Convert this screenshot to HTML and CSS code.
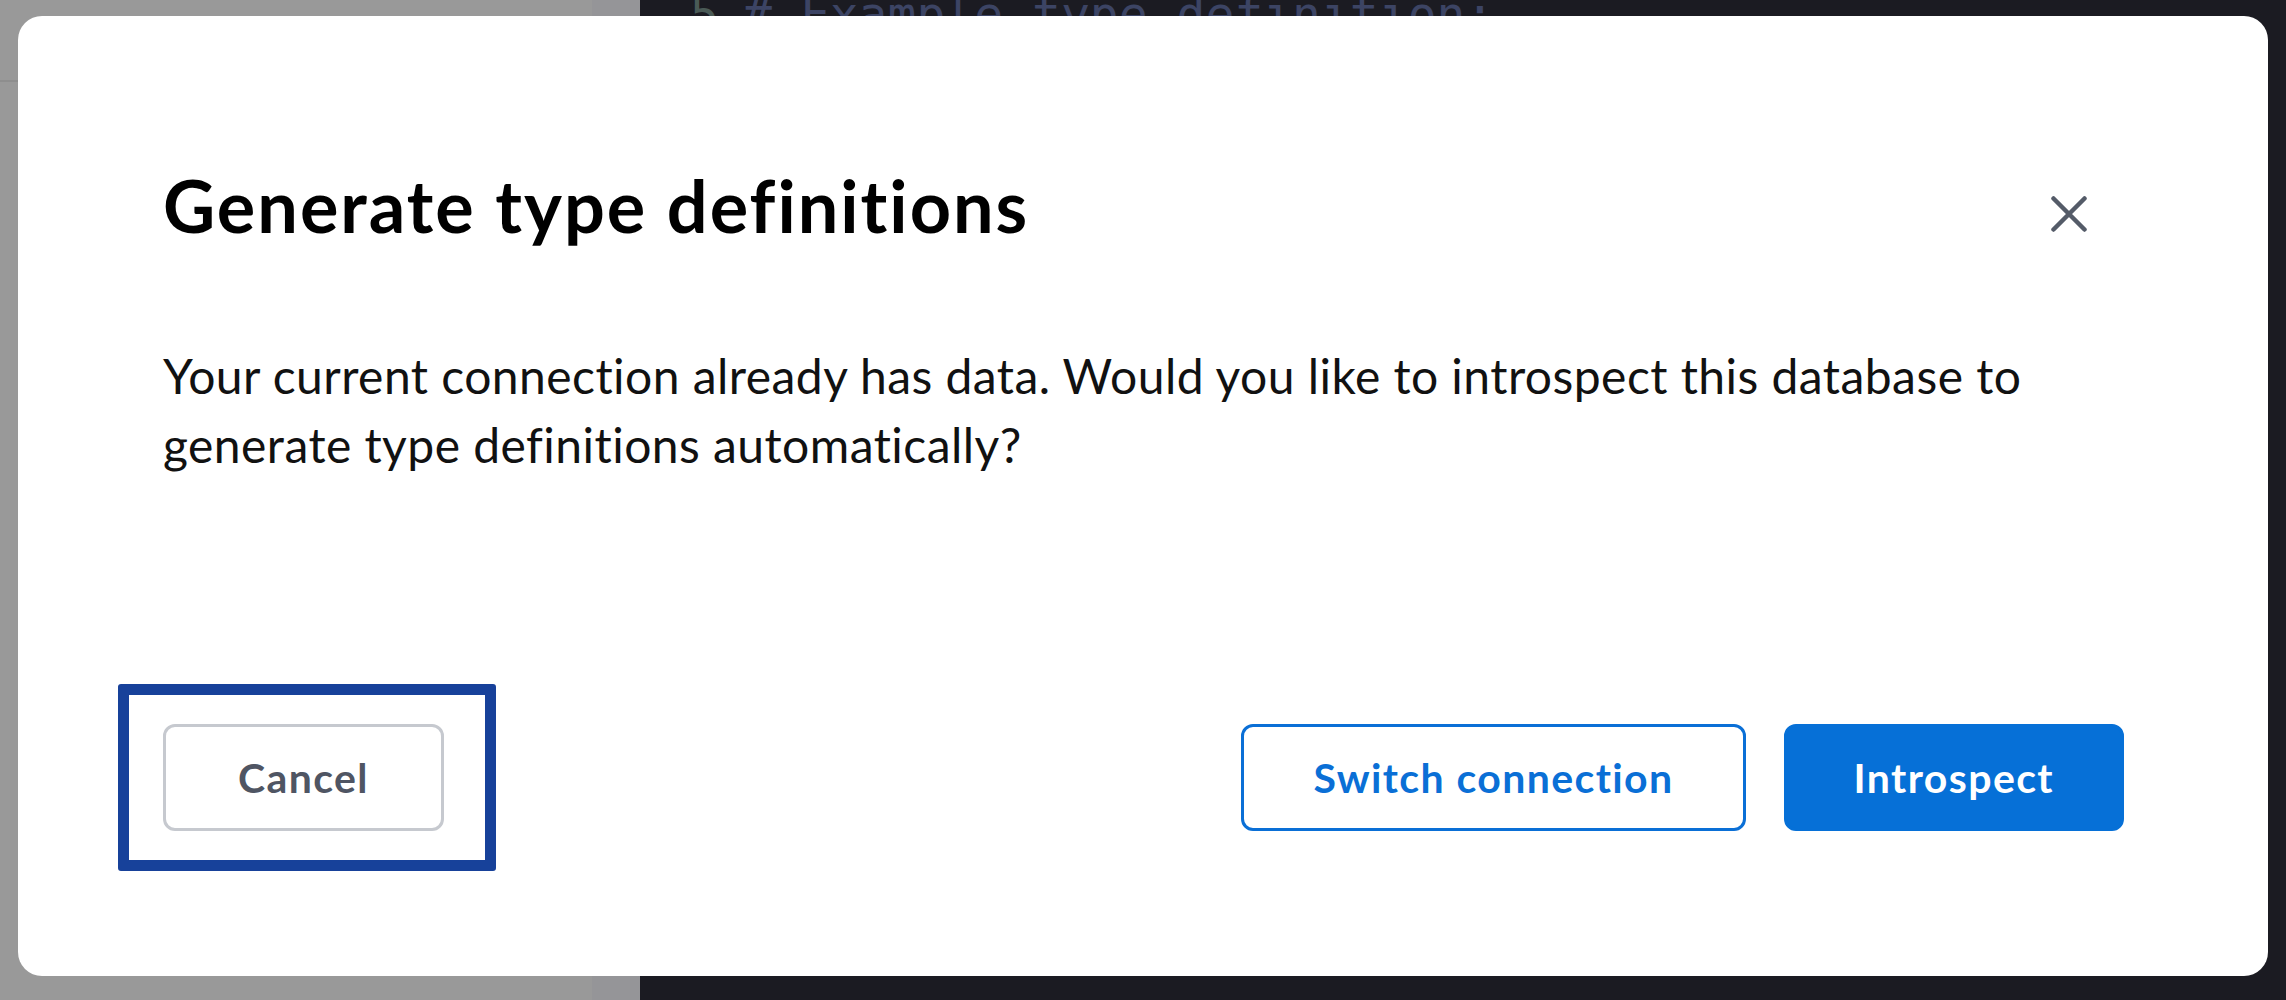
FILE: index.html
```html
<!DOCTYPE html>
<html lang="en">
<head>
<meta charset="utf-8">
<title>Generate type definitions</title>
<link rel="stylesheet" href="styles.css">
</head>
<body>
<div class="app">
  <aside class="sidebar">
    <div class="sidebar-header"></div>
  </aside>
  <div class="rail"></div>
  <main class="editor">
    <div class="code">
      <div class="code-line"><span class="ln">5</span><span class="comment"># Example type definition:</span></div>
    </div>
  </main>
</div>

<div class="modal" role="dialog" aria-labelledby="dlg-title">
  <div class="modal-header">
    <h1 class="modal-title" id="dlg-title">Generate type definitions</h1>
    <button class="close-btn" aria-label="Close">
      <svg width="36" height="36" viewBox="0 0 36 36" aria-hidden="true">
        <path d="M2.5 2.5 L33.5 33.5 M33.5 2.5 L2.5 33.5" stroke="#545b68" stroke-width="4.5" stroke-linecap="round" fill="none"/>
      </svg>
    </button>
  </div>
  <p class="modal-text">Your current connection already has data. Would you like to introspect this database to generate type definitions automatically?</p>
  <div class="modal-footer">
    <div class="focus-wrap">
      <button class="btn btn-cancel">Cancel</button>
    </div>
    <div class="actions">
      <button class="btn btn-outline">Switch connection</button>
      <button class="btn btn-primary">Introspect</button>
    </div>
  </div>
</div>
</body>
</html>
```
FILE: styles.css
```css
* { box-sizing: border-box; }
html, body { margin: 0; height: 100%; }
body {
  background: #1b1b22;
  font-family: Lato, "Noto Sans", sans-serif;
  overflow: hidden;
}
.app {
  display: flex;
  height: 100vh;
}
.sidebar {
  width: 592px;
  background: #999999;
}
.sidebar-header {
  height: 82px;
  border-bottom: 2px solid #8e8e8e;
}
.rail {
  width: 48px;
  background: #959598;
}
.editor {
  flex: 1;
  background: #1b1b22;
  overflow: hidden;
}
.code {
  margin-top: -14px;
  font-family: "DejaVu Sans Mono", monospace;
  font-size: 48px;
  line-height: 56px;
}
.code-line { display: flex; }
.ln {
  width: 103px;
  padding-left: 50px;
  color: #4a5a56;
}
.comment { color: #3c4464; white-space: pre; }

.modal {
  position: fixed;
  left: 18px;
  top: 16px;
  width: 2250px;
  height: 960px;
  background: #ffffff;
  border-radius: 24px;
  padding: 143px 144px 145px 145px;
  display: flex;
  flex-direction: column;
}
.modal-header {
  display: flex;
  align-items: flex-start;
  justify-content: space-between;
  height: 110px;
}
.modal-title {
  margin: 10px 0 0;
  font-size: 72px;
  font-weight: 700;
  letter-spacing: 2px;
  color: #000000;
  line-height: 1;
}
.close-btn {
  width: 110px;
  height: 110px;
  border: 0;
  background: none;
  padding: 0;
  display: flex;
  align-items: center;
  justify-content: center;
}
.modal-text {
  margin: 72px 0 0;
  font-size: 48px;
  line-height: 69px;
  letter-spacing: 0.45px;
  color: #111111;
  max-width: 1920px;
}
.modal-footer {
  margin-top: auto;
  display: flex;
  justify-content: space-between;
  align-items: center;
}
.actions {
  display: flex;
  gap: 38px;
}
.focus-wrap {
  position: relative;
}
.focus-wrap::after {
  content: "";
  position: absolute;
  left: -45px;
  top: -40px;
  right: -52px;
  bottom: -40px;
  border: 11px solid #17419a;
  border-radius: 3px;
  pointer-events: none;
}
.btn {
  height: 107px;
  padding: 0 72px;
  border: 3px solid transparent;
  border-radius: 12px;
  font-family: inherit;
  font-size: 41px;
  font-weight: 700;
  letter-spacing: 1.4px;
  background: #ffffff;
  cursor: pointer;
}
.btn-cancel {
  border-color: #c6c9cf;
  color: #4f5563;
}
.btn-outline {
  padding: 0 69px;
  border-color: #0a6fd6;
  color: #0a6fd6;
}
.btn-primary {
  padding: 0 67px;
  background: #0670d7;
  border-color: #0670d7;
  color: #ffffff;
}
```
